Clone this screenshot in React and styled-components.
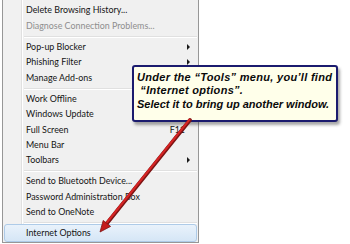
import React from "react";
import styled, { createGlobalStyle } from "styled-components";

const GlobalStyle = createGlobalStyle`
  html, body {
    margin: 0;
    padding: 0;
    background: #ffffff;
  }
`;

const Page = styled.div`
  position: relative;
  width: 350px;
  height: 244px;
  overflow: hidden;
  background: #ffffff;
`;

const Menu = styled.div`
  margin-left: 2px;
  width: 197px;
  box-sizing: border-box;
  padding: 2.35px 1px 1px 1px;
  border: 1px solid #979797;
  border-top: none;
  background: linear-gradient(
    to right,
    #f1f1f1 0 18px,
    #e0e0e0 18px 19px,
    #ffffff 19px 20px,
    #f0f0f0 20px
  );
  font-family: Lato, "Open Sans", sans-serif;
  font-size: 8.9px;
`;

const Item = styled.div`
  display: flex;
  align-items: center;
  box-sizing: border-box;
  height: ${(p) => (p.$active ? "17.3px" : "15.3px")};
  margin: ${(p) => (p.$active ? "-1px 0" : "0")};
  padding: 0 6px 0 ${(p) => (p.$active ? "21px" : "22px")};
  color: ${(p) => (p.$disabled ? "#8e8e8e" : "#141414")};
  border: ${(p) => (p.$active ? "1px solid #aecbe8" : "none")};
  border-radius: 3px;
  background: ${(p) =>
    p.$active ? "linear-gradient(#e9f2fb, #d5e6f6)" : "transparent"};
  white-space: nowrap;
`;

const Label = styled.span`
  flex: 1;
`;

const Shortcut = styled.span`
  margin-right: 6px;
`;

const SubArrow = styled.span`
  width: 0;
  height: 0;
  margin-right: 1px;
  border-top: 3px solid transparent;
  border-bottom: 3px solid transparent;
  border-left: 3px solid #1a1a1a;
`;

const Separator = styled.div`
  height: 6px;
  box-sizing: border-box;
  margin-left: 20px;
  padding-top: 3px;
  &::after {
    content: "";
    display: block;
    height: 1px;
    background: #e0e0e0;
    border-bottom: 1px solid #ffffff;
  }
`;

const Callout = styled.div`
  position: absolute;
  left: 132px;
  top: 65px;
  width: 206px;
  height: 57px;
  box-sizing: border-box;
  padding: 4px 0 0 3px;
  border: 2px solid #1b1b6e;
  border-radius: 3px;
  background: #ffffea;
  box-shadow: 2px 3px 3px rgba(60, 60, 60, 0.45);
  font-family: "Liberation Sans", Arial, sans-serif;
  font-size: 11px;
  font-weight: bold;
  font-style: italic;
  line-height: 13.4px;
  color: #0a0a0a;
  white-space: pre;
`;

const CalloutLine = styled.div`
  letter-spacing: ${(p) => p.$spacing || 0}px;
`;

const Overlay = styled.svg`
  position: absolute;
  left: 0;
  top: 0;
  pointer-events: none;
`;

const rows = [
  { label: "Delete Browsing History..." },
  { label: "Diagnose Connection Problems...", disabled: true },
  "sep",
  { label: "Pop-up Blocker", sub: true },
  { label: "Phishing Filter", sub: true },
  { label: "Manage Add-ons" },
  "sep",
  { label: "Work Offline" },
  { label: "Windows Update" },
  { label: "Full Screen", shortcut: "F11" },
  { label: "Menu Bar" },
  { label: "Toolbars", sub: true },
  "sep",
  { label: "Send to Bluetooth Device..." },
  { label: "Password Administration Box" },
  { label: "Send to OneNote" },
  "sep",
  { label: "Internet Options", active: true },
];

const Arrow = () => (
  <Overlay width="350" height="244" viewBox="0 0 350 244">
    <line x1="190" y1="120" x2="106" y2="224.5" stroke="#7d1414" strokeWidth="3.8" strokeLinecap="round" />
    <line x1="189.5" y1="119.6" x2="105.6" y2="224" stroke="#d62424" strokeWidth="2.1" strokeLinecap="round" />
    <polygon points="100,232 103.2,220.4 110.6,226.4" fill="#c41c1c" stroke="#7d1414" strokeWidth="0.8" strokeLinejoin="round" />
  </Overlay>
);

const App = () => {
  return (
    <Page>
      <GlobalStyle />
      <Menu>
        {rows.map((row, i) =>
          row === "sep" ? (
            <Separator key={i} />
          ) : (
            <Item key={i} $disabled={row.disabled} $active={row.active}>
              <Label>{row.label}</Label>
              {row.shortcut && <Shortcut>{row.shortcut}</Shortcut>}
              {row.sub && <SubArrow />}
            </Item>
          )
        )}
      </Menu>
      <Callout>
        <CalloutLine $spacing={0.3}>{"Under the \u201cTools\u201d menu, you\u2019ll find"}</CalloutLine>
        <CalloutLine $spacing={0.3}>{" \u201cInternet options\u201d."}</CalloutLine>
        <CalloutLine>{"Select it to bring up another window."}</CalloutLine>
      </Callout>
      <Arrow />
    </Page>
  );
};

export default App;
